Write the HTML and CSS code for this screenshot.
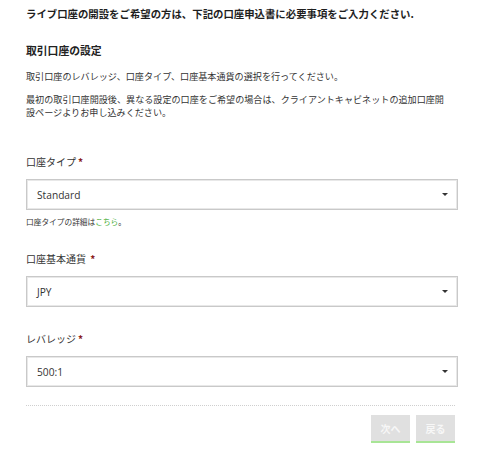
FILE: index.html
```html
<!DOCTYPE html>
<html lang="ja">
<head>
<meta charset="utf-8">
<title>口座の設定</title>
<link rel="stylesheet" href="styles.css">
</head>
<body>
<div class="page">
  <p class="title">ライブ口座の開設をご希望の方は、下記の口座申込書に必要事項をご入力ください.</p>
  <h2 class="section">取引口座の設定</h2>
  <p class="text first">取引口座のレバレッジ、口座タイプ、口座基本通貨の選択を行ってください。</p>
  <p class="text second">最初の取引口座開設後、異なる設定の口座をご希望の場合は、クライアントキャビネットの追加口座開設ページよりお申し込みください。</p>

  <div class="field field-1">
    <div class="label">口座タイプ<span class="req">*</span></div>
    <div class="select"><span class="value">Standard</span><span class="caret"></span></div>
    <div class="help">口座タイプの詳細は<span class="link">こちら</span>。</div>
  </div>

  <div class="field field-2">
    <div class="label">口座基本通貨 <span class="req">*</span></div>
    <div class="select"><span class="value">JPY</span><span class="caret"></span></div>
  </div>

  <div class="field field-3">
    <div class="label">レバレッジ<span class="req">*</span></div>
    <div class="select"><span class="value">500:1</span><span class="caret"></span></div>
  </div>

  <div class="divider"></div>
  <div class="actions">
    <span class="btn">次へ</span>
    <span class="btn">戻る</span>
  </div>
</div>
</body>
</html>
```

FILE: styles.css
```css
html, body {
  margin: 0;
  padding: 0;
  background: #ffffff;
}
body {
  font-family: "Noto Sans CJK JP", "Noto Sans", sans-serif;
  color: #333333;
}
.page {
  width: 432px;
  padding: 6px 0 0 26px;
}
.title {
  margin: 0;
  font-size: 10.4px;
  line-height: 16px;
  font-weight: 700;
  color: #1e1e1e;
  white-space: nowrap;
}
.section {
  margin: 20px 0 0;
  font-size: 10.8px;
  line-height: 16px;
  font-weight: 700;
  color: #222222;
}
.text {
  margin: 0;
  font-size: 9.1px;
  line-height: 13px;
  color: #333333;
}
.text.first {
  margin-top: 12px;
}
.text.second {
  margin-top: 10px;
  width: 425px;
}
.field-1 {
  margin-top: 35px;
}
.field-2 {
  margin-top: 23px;
}
.field-3 {
  margin-top: 24px;
}
.label {
  font-size: 10px;
  line-height: 16px;
  color: #333333;
}
.req {
  color: #8b1c1c;
  font-weight: 700;
  margin-left: 2px;
}
.select {
  margin-top: 9px;
  height: 29px;
  border: 1px solid #c9c9c9;
  box-shadow: inset 0 0 0 1px #e8e8e8;
  display: flex;
  align-items: center;
  justify-content: space-between;
  padding: 0 9px 0 10px;
}
.value {
  font-family: "Open Sans", "Noto Sans", sans-serif;
  font-size: 10.2px;
  color: #333333;
}
.caret {
  width: 0;
  height: 0;
  border-top: 3px solid #333333;
  border-left: 3px solid transparent;
  border-right: 3px solid transparent;
}
.help {
  margin-top: 6px;
  font-size: 7.7px;
  line-height: 12px;
  color: #333333;
}
.link {
  color: #4caf3c;
}
.divider {
  margin-top: 18px;
  width: 429px;
  border-top: 1px dotted #cfcfcf;
}
.actions {
  width: 429px;
  margin-top: 9px;
  display: flex;
  justify-content: flex-end;
  gap: 6px;
}
.btn {
  width: 39px;
  height: 26px;
  background: #e0e0e0;
  border-bottom: 2px solid #a8e596;
  color: #f7f7f7;
  font-size: 10px;
  font-weight: 700;
  display: flex;
  align-items: center;
  justify-content: center;
}
```
